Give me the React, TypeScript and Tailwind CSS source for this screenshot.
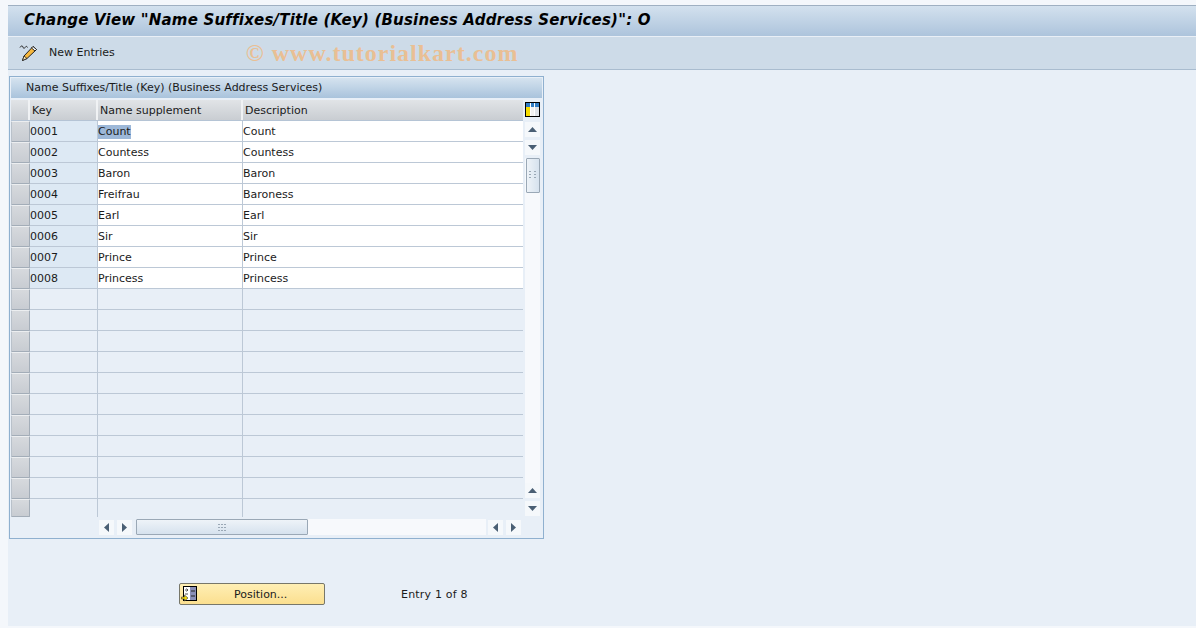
const ENTRIES = [
  ["0001", "Count", "Count"],
  ["0002", "Countess", "Countess"],
  ["0003", "Baron", "Baron"],
  ["0004", "Freifrau", "Baroness"],
  ["0005", "Earl", "Earl"],
  ["0006", "Sir", "Sir"],
  ["0007", "Prince", "Prince"],
  ["0008", "Princess", "Princess"],
];

const EMPTY_ROWS = Array.from({ length: 10 }, (_, i) => i);

function Selector({ short }: { short?: boolean }) {
  return (
    <div className={`w-[19px] ${short ? "h-[18px]" : "h-[21px]"} shrink-0 rounded-[1px] border border-[#a3adb8] border-t-[#eceef0] border-l-[#b9c1ca] bg-gradient-to-b from-[#d6d9dd] to-[#c8ccd2]`} />
  );
}

function Row({ cells }: { cells?: string[] }) {
  const filled = !!cells;
  return (
    <div className="flex h-[21px]">
      <Selector />
      <div className={`w-[68px] border-b border-r border-[#bcc8d6] leading-[22px] ${filled ? "bg-[#dde9f4]" : ""}`}>
        {cells?.[0]}
      </div>
      <div className={`w-[145px] border-b border-r border-[#bcc8d6] leading-[22px] ${filled ? "bg-white" : ""}`}>
        {cells?.[1] === "Count" ? <span className="inline-block h-[14px] bg-[#9db8d8] leading-[14px]">Count</span> : cells?.[1]}
      </div>
      <div className={`w-[280px] border-b border-[#bcc8d6] leading-[22px] ${filled ? "bg-white" : ""}`}>
        {cells?.[2]}
      </div>
    </div>
  );
}

function ScrollBtn({ dir }: { dir: "up" | "down" | "left" | "right" }) {
  const points = { up: "3,10 7.5,5 12,10", down: "3,5 12,5 7.5,10", left: "10,3 10,12 5,7.5", right: "5,3 5,12 10,7.5" }[dir];
  return (
    <div className="h-[15px] w-[15px] shrink-0 bg-[#f5f8fb]">
      <svg width="15" height="15" viewBox="0 0 15 15">
        <polygon points={points} fill="#4a5f74" />
      </svg>
    </div>
  );
}

function Grip({ horizontal }: { horizontal?: boolean }) {
  return (
    <svg width={horizontal ? 9 : 7} height={horizontal ? 7 : 9} viewBox={horizontal ? "0 0 9 7" : "0 0 7 9"}>
      {(horizontal ? [0, 3, 6] : [0, 5]).map((x) =>
        [0, 3, 6].map((y) => (
          <rect key={`${x}-${y}`} x={x} y={y} width="2" height="1" fill="#9aa8b6" />
        )),
      )}
    </svg>
  );
}

export default function App() {
  return (
    <div className="flex h-[628px] w-[1196px] flex-col overflow-hidden bg-[#f4f7fb] pb-[2px] pl-[8px] pt-[5px] font-['DejaVu_Sans',sans-serif] text-[11px] text-[#1b1b1b]">
      {/* Title bar */}
      <div className="flex h-[31px] shrink-0 items-center border-t border-[#9fb0c2] bg-gradient-to-b from-[#d3e1ee] to-[#adc4dc] pb-[2px] pl-[16px] text-[15px] font-bold italic tracking-[0.2px] text-black">
        Change View "Name Suffixes/Title (Key) (Business Address Services)": O
      </div>

      {/* Toolbar */}
      <div className="flex h-[34px] shrink-0 items-center border-t border-[#e9eff6] border-b border-b-[#a9bccf] bg-[#cddbe8] pb-[1px]">
        <svg className="ml-[11px]" width="20" height="18" viewBox="0 0 20 18">
          <path d="M1 3.5c1-2 2.5-2 3-.5s1 2 2 .5 2-1.500 2.500 0" fill="none" stroke="#2b2b2b" strokeWidth="1" />
          <path d="M14 2.500l3.500 3-9.500 9-4.500 2 1.500-4.500z" fill="#f6b73c" stroke="#222" strokeWidth="1" />
          <path d="M14 2.500l3.500 3-1.500 1.500-3.500-3z" fill="#fff" stroke="#222" strokeWidth="1" />
          <path d="M3.500 16.500l1.500-4.500 3 2.500z" fill="#f9e4b0" stroke="#222" strokeWidth="0.8" />
        </svg>
        <span className="ml-[10px] pt-[2px]">New Entries</span>
        <span className="ml-[131px] whitespace-nowrap font-['Liberation_Serif',serif] text-[24px] font-bold tracking-[1px] text-[#e9bf94]">© www.tutorialkart.com</span>
      </div>

      {/* Table panel */}
      <div className="flex flex-1 flex-col bg-[#e8eff7]">
        <div className="ml-[1px] mt-[6px] h-[463px] w-[535px] border border-[#8fb0cf] p-[1px]">
          <div className="flex h-[20px] items-center bg-gradient-to-b from-[#d5e3ef] to-[#a9c3dc] pl-[15px]">
            Name Suffixes/Title (Key) (Business Address Services)
          </div>
          <div className="mt-[2px] flex">
            <div>
              {/* Header */}
              <div className="flex h-[21px] border-b border-[#b5c4d5] bg-gradient-to-b from-[#e1e4e7] to-[#c9cdd2] leading-[22px]">
                <div className="w-[19px] border-r-2 border-[#f0f2f4]" />
                <div className="w-[68px] border-r-2 border-[#f0f2f4] pl-[2px]">Key</div>
                <div className="w-[145px] border-r-2 border-[#f0f2f4] pl-[2px]">Name supplement</div>
                <div className="w-[280px] pl-[2px]">Description</div>
              </div>
              {ENTRIES.map((entry) => (
                <Row key={entry[0]} cells={entry} />
              ))}
              {EMPTY_ROWS.map((i) => (
                <Row key={i} />
              ))}
              <div className="flex h-[18px]">
                <Selector short />
                <div className="w-[68px] border-r border-[#bcc8d6]" />
                <div className="w-[145px] border-r border-[#bcc8d6]" />
              </div>
            </div>

            {/* Vertical scrollbar */}
            <div className="flex w-[18px] flex-col items-center">
              <svg className="mb-[3px] mt-[2px]" width="15" height="15" viewBox="0 0 15 15">
                <rect x="0.5" y="0.5" width="14" height="14" fill="#fff" stroke="#000" />
                <rect x="1" y="1" width="13" height="4" fill="#2f7cc4" />
                <rect x="5" y="1" width="1" height="13" fill="#fff" />
                <rect x="9" y="1" width="1" height="13" fill="#fff" />
                <rect x="1" y="5" width="4" height="9" fill="#f7dc00" />
                <rect x="6" y="5" width="3" height="9" fill="#f2f2f2" />
                <rect x="10" y="5" width="4" height="9" fill="#dfe3e8" />
              </svg>
              <div className="mt-[2px] flex flex-col gap-[3px]">
                <ScrollBtn dir="up" />
                <ScrollBtn dir="down" />
              </div>
              <div className="mt-[3px] flex h-[325px] w-[15px] flex-col bg-[#f7f9fc]">
                <div className="flex h-[35px] w-[14px] items-center justify-center self-end rounded-[1px] border border-[#9aa8b6] bg-gradient-to-r from-[#eef3f8] to-[#d6e2ee]">
                  <Grip />
                </div>
              </div>
              <div className="flex flex-col gap-[3px]">
                <ScrollBtn dir="up" />
                <ScrollBtn dir="down" />
              </div>
            </div>
          </div>

          {/* Horizontal scrollbar */}
          <div className="ml-[88px] mt-[2px] flex h-[16px] w-[422px] items-center">
            <ScrollBtn dir="left" />
            <div className="ml-[3px]">
              <ScrollBtn dir="right" />
            </div>
            <div className="ml-[4px] flex h-[16px] flex-1 bg-[#f7f9fc]">
              <div className="flex h-[16px] w-[172px] items-center justify-center rounded-[1px] border border-[#9aa8b6] bg-gradient-to-b from-[#eef3f8] to-[#d6e2ee]">
                <Grip horizontal />
              </div>
            </div>
            <div className="ml-[2px]">
              <ScrollBtn dir="left" />
            </div>
            <div className="ml-[3px]">
              <ScrollBtn dir="right" />
            </div>
          </div>
        </div>

        {/* Footer */}
        <div className="ml-[171px] mt-[44px] flex items-center">
          <button className="flex h-[22px] w-[146px] items-center rounded-[2px] border border-[#77776a] bg-gradient-to-b from-[#ffefb4] to-[#fbdf8f] pl-[1px]">
            <svg width="16" height="16" viewBox="0 0 16 16">
              <rect x="2.500" y="0.500" width="13" height="14" fill="#fff" stroke="#000" />
              <rect x="9" y="1" width="6" height="13" fill="#8a8fb8" />
              <path d="M10 5h4M10 10h4" stroke="#222" />
              <path d="M4 4h3M5.500 2.500l1.500 1.500-1.500 1.500M4 8h3" fill="none" stroke="#555" />
              <path d="M0.500 11h3V9l3.500 3-3.500 3v-2h-3z" fill="#f5d90a" stroke="#333" strokeWidth="0.6" />
            </svg>
            <span className="ml-[37px] pt-[2px]">Position...</span>
          </button>
          <span className="ml-[76px] pt-[2px] tracking-[0.2px]">Entry 1 of 8</span>
        </div>
      </div>
    </div>
  );
}
